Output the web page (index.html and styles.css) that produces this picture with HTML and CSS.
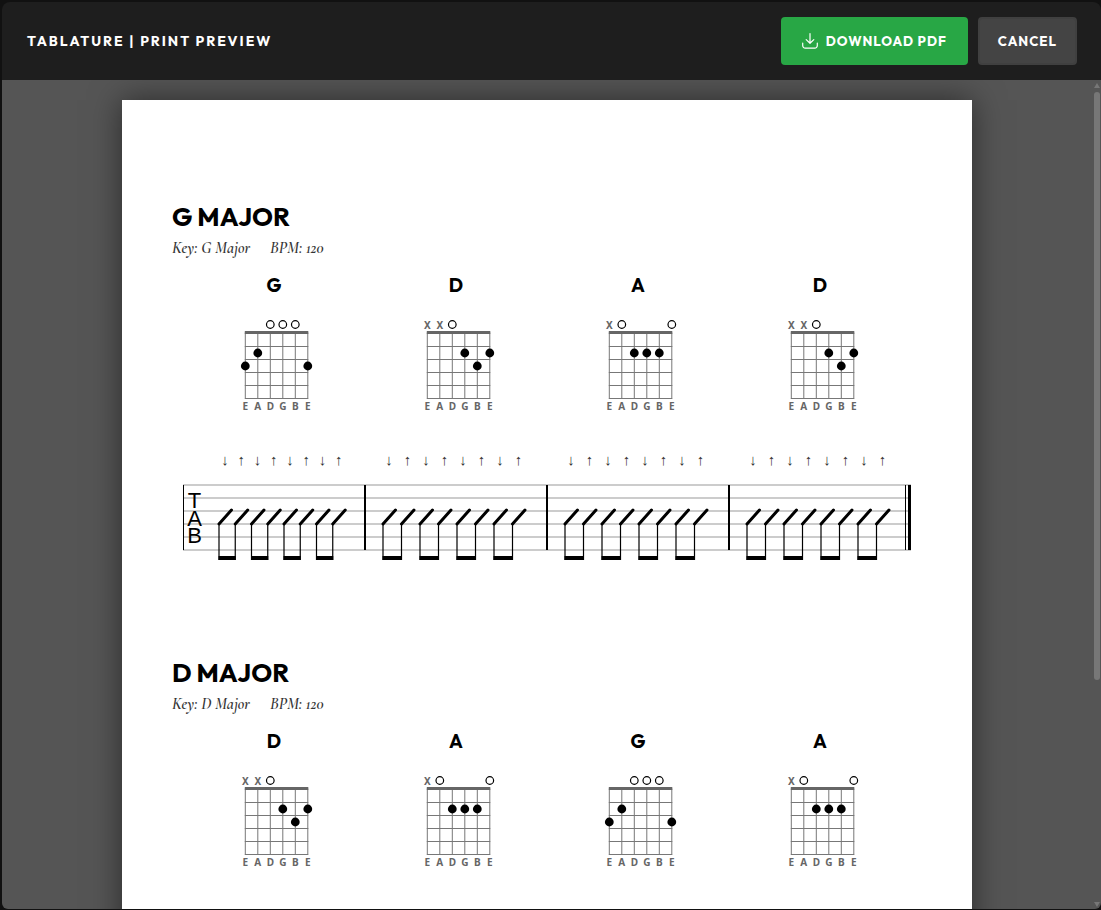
FILE: index.html
```html
<!DOCTYPE html>
<html lang="en">
<head>
<meta charset="utf-8">
<title>Tablature | Print Preview</title>
<link rel="stylesheet" href="styles.css">
</head>
<body>
<div class="window">
  <header class="toolbar">
    <h1 class="toolbar-title">TABLATURE | PRINT PREVIEW</h1>
    <div class="actions">
      <button class="btn btn-download" type="button">
        <svg class="icon" viewBox="0 0 16 16" aria-hidden="true"><path d="M8 .6v9.6M4.200 6.600 8 10.300l3.800-3.700M.7 10v2.600a2.500 2.500 0 0 0 2.500 2.500h9.600a2.500 2.500 0 0 0 2.500-2.500V10"/></svg>
        DOWNLOAD PDF
      </button>
      <button class="btn btn-cancel" type="button">CANCEL</button>
    </div>
  </header>
  <div class="viewport">
    <main class="scroller">
      <article class="sheet">
        <section class="song" data-chords="G D A D">
          <h2 class="song-title">G MAJOR</h2>
          <p class="meta"><span>Key: G Major</span><span>BPM: 120</span></p>
        </section>
        <section class="song" data-chords="D A G A">
          <h2 class="song-title">D MAJOR</h2>
          <p class="meta"><span>Key: D Major</span><span>BPM: 120</span></p>
        </section>
      </article>
    </main>
    <div class="scrollbar" aria-hidden="true">
      <span class="arrow arrow-up"></span>
      <span class="track"><span class="thumb"></span></span>
      <span class="arrow arrow-down"></span>
    </div>
  </div>
</div>
<script src="script.js"></script>
</body>
</html>
```
FILE: styles.css
```css
* { box-sizing: border-box; }

body {
  margin: 0;
  background: #111;
  font-family: Outfit, Lato, "Open Sans", sans-serif;
}

.window {
  display: flex;
  flex-direction: column;
  height: 100vh;
  border: solid #111;
  border-width: 2px 0 1px 2px;
}

.toolbar {
  display: flex;
  align-items: center;
  justify-content: space-between;
  padding: 15px 24px 15px 25px;
  background: #1e1e1e;
  border-radius: 8px 8px 0 0;
}

.toolbar-title {
  margin: 0;
  color: #fff;
  font-size: 14px;
  font-weight: 700;
  line-height: 20px;
  letter-spacing: 2px;
}

.actions { display: flex; gap: 10px; }

.btn {
  display: flex;
  align-items: center;
  justify-content: center;
  gap: 8px;
  height: 48px;
  padding: 0 18px;
  border: 0;
  border-radius: 4px;
  color: #fff;
  font-family: inherit;
  font-weight: 700;
  letter-spacing: 1px;
}

.btn-download { min-width: 187px; background: #28a745; }
.btn-cancel { min-width: 99px; background: #444; border: 2px solid #404040; }

.icon {
  width: 16px;
  height: 16px;
  fill: none;
  stroke: #fff;
  stroke-width: 1.2;
  stroke-linecap: round;
  stroke-linejoin: round;
}

.viewport {
  display: flex;
  flex: 1;
  min-height: 0;
  background: #555;
  border-radius: 0 0 6px 6px;
  overflow: hidden;
}

.scroller {
  flex: 1;
  padding: 20px;
  overflow-y: auto;
  scrollbar-width: none;
}

.sheet {
  max-width: 850px;
  margin: 0 auto;
  padding: 100px 50px;
  background: #fff;
  color: #000;
  box-shadow: 0 0 30px rgba(0, 0, 0, 0.5);
}

.song { margin-bottom: 94px; }

.song-title {
  margin: 0;
  font-size: 26px;
  font-weight: 700;
  line-height: 34px;
}

.meta {
  display: flex;
  gap: 20px;
  margin: 4px 0 15px;
  color: #333;
  font-family: "Cormorant Garamond", "Liberation Serif", serif;
  font-size: 16px;
  font-style: italic;
  font-weight: 600;
  line-height: 20px;
}

.chords {
  display: grid;
  grid-template-columns: repeat(4, 1fr);
  padding: 0 11px;
}

.chord { text-align: center; }

.chord-name {
  margin: 0 0 19px;
  font-size: 19px;
  font-weight: 700;
  line-height: 24px;
}

.diagram { display: block; width: 88px; margin: 0 auto; }

.diagram text {
  fill: #666;
  font: 700 10px "Noto Sans", "Open Sans", sans-serif;
  text-anchor: middle;
}

.grid-line { stroke: #777; stroke-width: 1; }
.nut { stroke: #666; stroke-width: 3; }
.open { fill: none; stroke: #000; stroke-width: 1.2; }

.staff { display: block; width: 100%; margin-top: 32px; }
.staff-line { stroke: #999; stroke-width: 1; }
.clef { font: 22px "Liberation Sans", Arial, sans-serif; text-anchor: middle; }
.strum { font: 15px "Liberation Sans", Arial, sans-serif; fill: #333; text-anchor: middle; }
.slash { stroke: #000; stroke-width: 3; stroke-linecap: round; }
.stem { stroke: #000; stroke-width: 1.2; }

.scrollbar {
  display: flex;
  flex-direction: column;
  align-items: center;
  gap: 4px;
  width: 9px;
  padding: 3px 1px 2px 2px;
}

.arrow { border: 3px solid transparent; }
.arrow-up { border-top: 0; border-bottom: 5px solid #777; }
.arrow-down { border-bottom: 0; border-top: 5px solid #777; }
.track { flex: 1; width: 6px; }
.thumb { display: block; height: 73%; border-radius: 3px; background: #777; }
```
FILE: script.js
```js
// One character per string, low E to high E: x = muted, 0 = open, otherwise the fret.
const SHAPES = { G: "320003", D: "xx0232", A: "x02220" };
const STRINGS = "EADGBE";

function line(cls, x1, y1, x2, y2) {
  return `<line class="${cls}" x1="${x1}" y1="${y1}" x2="${x2}" y2="${y2}"/>`;
}

function diagram(name) {
  const x = i => 15.5 + i * 12.5;
  let s = "";
  for (let i = 0; i < 6; i++) s += line("grid-line", x(i), 17, x(i), 83);
  for (let f = 1; f <= 5; f++) s += line("grid-line", 15, 18 + f * 13, 78.5, 18 + f * 13);
  s += line("nut", 15, 17, 78.5, 17);
  [...SHAPES[name]].forEach((c, i) => {
    if (c === "x") s += `<text x="${x(i)}" y="13.5">X</text>`;
    else if (c === "0") s += `<circle class="open" cx="${x(i)}" cy="9" r="3.8"/>`;
    else s += `<circle cx="${x(i)}" cy="${11.5 + c * 13}" r="4.4"/>`;
    s += `<text x="${x(i)}" y="94.5">${STRINGS[i]}</text>`;
  });
  return `<svg class="diagram" viewBox="0.2 0.5 88 100">${s}</svg>`;
}

function staff() {
  let s = "";
  for (let i = 0; i < 6; i++) s += line("staff-line", 11, 37 + i * 13, 739, 37 + i * 13);
  s += '<rect x="11" y="37" width="1" height="65"/>';
  ["T", "A", "B"].forEach((c, i) => { s += `<text class="clef" x="22.5" y="${60 + i * 17.5}">${c}</text>`; });
  for (let m = 0; m < 4; m++) {
    const start = 11 + m * 182 + (m ? 18 : 36);
    const step = m ? 18.5 : 16.25;
    if (m) s += `<rect x="${10 + m * 182}" y="37" width="2" height="65"/>`;
    for (let n = 0; n < 8; n++) {
      const x = start + n * step;
      s += `<text class="strum" x="${x + 6}" y="17">${n % 2 ? "↑" : "↓"}</text>`;
      s += line("slash", x, 76, x + 12.5, 62) + line("stem", x, 76, x, 112);
      if (n % 2 === 0) s += `<rect x="${x - 0.5}" y="108" width="${step + 1}" height="4"/>`;
    }
  }
  s += '<rect x="733" y="37" width="1" height="65"/><rect x="736" y="37" width="3" height="65"/>';
  return `<svg class="staff" viewBox="0 0 750 114">${s}</svg>`;
}

document.querySelectorAll(".song").forEach(song => {
  const chords = song.dataset.chords.split(" ").map(name =>
    `<div class="chord"><h3 class="chord-name">${name}</h3>${diagram(name)}</div>`).join("");
  song.insertAdjacentHTML("beforeend", `<div class="chords">${chords}</div>${staff()}`);
});
```
